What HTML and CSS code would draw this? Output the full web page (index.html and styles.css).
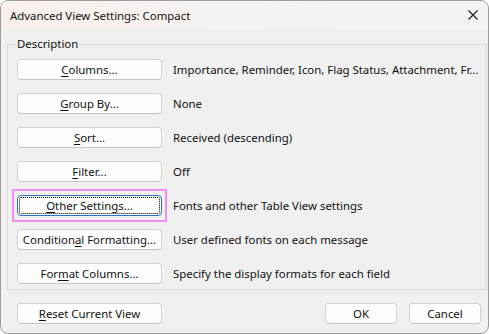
FILE: index.html
```html
<!DOCTYPE html>
<html>
<head lang="en">
    <meta charset="UTF-8">
    <title>Advanced View Settings: Compact</title>
    <link rel="stylesheet" href="styles.css">
</head>
<body>
    <div class="window">
        <div class="titlebar">
            <span class="title">Advanced View Settings: Compact</span>
            <svg class="close" width="10" height="10" viewBox="0 0 10 10">
                <path d="M0.5 0.5 L9.5 9.5 M9.5 0.5 L0.5 9.5" stroke="#1b1b1b" stroke-width="1.1" fill="none"/>
            </svg>
        </div>
        <div class="content">
            <fieldset class="group">
                <legend>Description</legend>
                <div class="row">
                    <button class="btn wide"><u>C</u>olumns...</button>
                    <span class="label">Importance, Reminder, Icon, Flag Status, Attachment, Fr...</span>
                </div>
                <div class="row">
                    <button class="btn wide"><u>G</u>roup By...</button>
                    <span class="label">None</span>
                </div>
                <div class="row">
                    <button class="btn wide"><u>S</u>ort...</button>
                    <span class="label">Received (descending)</span>
                </div>
                <div class="row">
                    <button class="btn wide"><u>F</u>ilter...</button>
                    <span class="label">Off</span>
                </div>
                <div class="row">
                    <span class="highlight">
                        <button class="btn wide focus"><u>O</u>ther Settings...</button>
                    </span>
                    <span class="label">Fonts and other Table View settings</span>
                </div>
                <div class="row">
                    <button class="btn wide">Condition<u>a</u>l Formatting...</button>
                    <span class="label">User defined fonts on each message</span>
                </div>
                <div class="row">
                    <button class="btn wide">For<u>m</u>at Columns...</button>
                    <span class="label">Specify the display formats for each field</span>
                </div>
            </fieldset>
            <div class="footer">
                <button class="btn wide"><u>R</u>eset Current View</button>
                <div class="actions">
                    <button class="btn small">OK</button>
                    <button class="btn small">Cancel</button>
                </div>
            </div>
        </div>
    </div>
</body>
</html>
```

FILE: styles.css
```css
*{
    margin:0;  padding:0;
    box-sizing: border-box;
}
body{
    font-family: "Noto Sans", "Open Sans", sans-serif;
    font-size: 11.4px;
    color:#111;
    background:#fff;
}
.window{
    width:489px;
    height:334px;
    border:1px solid #9c9c9c;
    border-radius: 8px;
    overflow: hidden;
    background-color: #f0f0f0;
}
.titlebar{
    height:29px;
    display:flex;
    align-items:center;
    justify-content: space-between;
    padding:0 10px 0 9px;
    background: linear-gradient(to right, #f8f0ec, #f4f2f1 60%, #f3f3f3);
}
.title{
    color:#111;
}
.close{
    margin-top:-1px;
}
.content{
    padding:6px 7px 0 6px;
}
.group{
    border:1px solid #dadada;
    padding:7px 8px 5px 9px;
}
.group legend{
    margin-left:-1px;
    padding:0 1px;
    line-height: 16px;
}
.row{
    display:flex;
    align-items:center;
    gap:11px;
    margin-bottom:13px;
}
.row:last-child{
    margin-bottom:0;
}
.btn{
    position: relative;
    height:21px;
    font-family: inherit;
    font-size: 11.4px;
    color:#111;
    background-color: #fdfdfd;
    border:1px solid #d3d3d3;
    border-bottom-color: #c4c4c4;
    border-radius: 4px;
    text-align: center;
    line-height: 18px;
}
.btn.wide{
    width:145px;
}
.btn.small{
    width:72px;
}
.btn u{
    text-underline-offset: 2px;
}
.highlight{
    display:flex;
    border:2px solid #f38cf3;
    padding:4px 3px;
    margin:-6px -5px;
}
.btn.focus{
    border-color:#2673c9;
}
.btn.focus::after{
    content:"";
    position:absolute;
    top:1px; left:1px; right:1px; bottom:1px;
    border:1px dotted #000;
    border-radius: 2px;
}
.label{
    white-space: nowrap;
}
.footer{
    display:flex;
    justify-content: space-between;
    align-items:center;
    padding:13px 0 0 10px;
}
.actions{
    display:flex;
    gap:12px;
}
```
